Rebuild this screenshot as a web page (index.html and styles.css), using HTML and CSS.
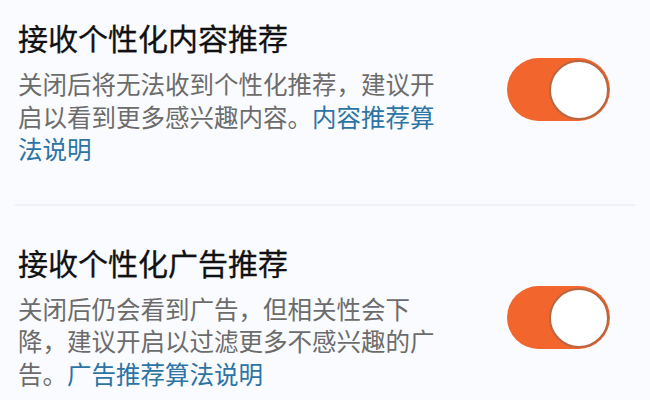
FILE: index.html
```html
<!DOCTYPE html>
<html lang="zh-CN">
<head>
<meta charset="utf-8">
<link rel="stylesheet" href="styles.css">
</head>
<body>
<div class="page">
  <div class="item first">
    <div class="text">
      <div class="title">接收个性化内容推荐</div>
      <div class="desc">关闭后将无法收到个性化推荐，建议开启以看到更多感兴趣内容。<span class="link">内容推荐算法说明</span></div>
    </div>
    <div class="toggle"><div class="knob"></div></div>
  </div>
  <div class="divider"></div>
  <div class="item second">
    <div class="text">
      <div class="title">接收个性化广告推荐</div>
      <div class="desc">关闭后仍会看到广告，但相关性会下降，建议开启以过滤更多不感兴趣的广告。<span class="link">广告推荐算法说明</span></div>
    </div>
    <div class="toggle"><div class="knob"></div></div>
  </div>
</div>
</body>
</html>
```

FILE: styles.css
```css
html, body {
  margin: 0;
  padding: 0;
  background: #fafbfe;
}
body {
  font-family: "Noto Sans CJK SC", "Noto Sans", sans-serif;
  width: 650px;
  height: 400px;
  overflow: hidden;
}
.page {
  display: flex;
  flex-direction: column;
}
.item {
  display: flex;
  align-items: center;
  justify-content: space-between;
  padding: 0 40px 0 18px;
}
.item.first {
  padding-top: 19px;
  padding-bottom: 38px;
}
.item.second {
  padding-top: 38px;
}
.text {
  display: flex;
  flex-direction: column;
  gap: 13px;
}
.title {
  font-size: 30px;
  line-height: 36px;
  font-weight: 400;
  color: #111113;
  -webkit-text-stroke: 0.3px #111113;
}
.desc {
  width: 425px;
  font-size: 24.5px;
  line-height: 32.5px;
  color: #6c6c6c;
}
.link {
  color: #2c74a5;
}
.divider {
  height: 2px;
  margin: 0 15px;
  background: #eef0f5;
}
.toggle {
  width: 103px;
  height: 63px;
  flex-shrink: 0;
  box-sizing: border-box;
  border-radius: 32px;
  background: #f2652d;
  display: flex;
  align-items: center;
  justify-content: flex-end;
  padding: 0 1px;
}
.item.first .toggle {
  margin-top: -5px;
}
.item.second .toggle {
  margin-top: 2px;
}
.knob {
  width: 60px;
  height: 60px;
  box-sizing: border-box;
  border-radius: 50%;
  background: #ffffff;
  border: 2px solid #b9653f;
}
```
